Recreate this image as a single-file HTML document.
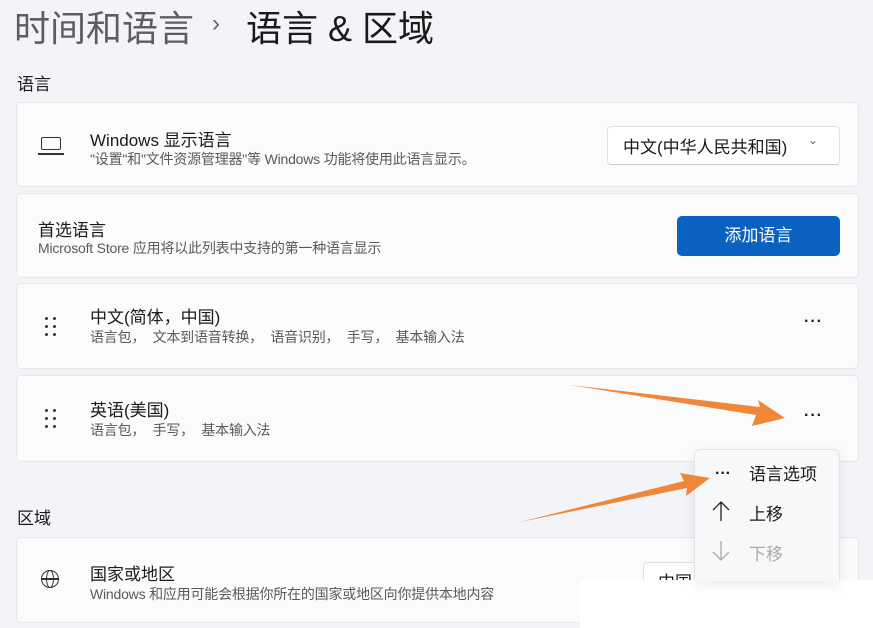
<html><head><style>
body{margin:0;width:873px;height:628px;background:#f2f4f8;font-family:"Liberation Sans","Noto Sans CJK SC",sans-serif;position:relative;overflow:hidden;color:#1a1a1a}
.a{position:absolute}
.card{position:absolute;left:16px;width:843px;background:#fbfbfc;border:1px solid #e6e7ea;border-radius:5px;box-sizing:border-box}
.t{font-size:17px;color:#1b1b1b}
.s{font-size:14px;color:#5a5a5a;letter-spacing:-0.2px}
.dots{font-size:16px;letter-spacing:1px;font-weight:bold}
.grip{position:absolute;left:28px;width:14px;height:20px}
.grip i{position:absolute;width:3px;height:3px;background:#333;border-radius:2px}
</style></head><body>
<div class="a" style="left:14px;top:0px;font-size:36px;color:#5e5e5e">时间和语言</div>
<div class="a" style="left:212px;top:10px;font-size:24px;color:#666">›</div>
<div class="a" style="left:246px;top:0px;font-size:36px;color:#1a1a1a">语言 &amp; 区域</div>
<div class="a" style="left:17px;top:70px;font-size:17px">语言</div>

<div class="card" style="top:102px;height:85px">
 <div class="a" style="left:24px;top:34px;width:20px;height:13px;border:1.5px solid #333;border-radius:2px;box-sizing:border-box"></div>
 <div class="a" style="left:21px;top:50px;width:26px;height:1.5px;background:#333"></div>
 <div class="a t" style="left:73px;top:23px">Windows 显示语言</div>
 <div class="a s" style="left:73px;top:46px">"设置"和"文件资源管理器"等 Windows 功能将使用此语言显示。</div>
 <div class="a" style="left:590px;top:23px;width:233px;height:39px;background:#fff;border:1px solid #e1e1e1;border-bottom-color:#ccc;border-radius:4px;box-sizing:border-box">
  <span class="a" style="left:15px;top:6px;font-size:17px">中文(中华人民共和国)</span>
  <span class="a" style="left:200px;top:6px;font-size:12px;color:#666">⌄</span></div>
</div>

<div class="card" style="top:193px;height:85px">
 <div class="a t" style="left:21px;top:22px">首选语言</div>
 <div class="a s" style="left:21px;top:44px">Microsoft Store 应用将以此列表中支持的第一种语言显示</div>
 <div class="a" style="left:660px;top:22px;width:163px;height:40px;background:#0a61c0;border-radius:5px;color:#fff;font-size:17px;text-align:center;line-height:40px">添加语言</div>
</div>

<div class="card" style="top:283px;height:86px">
 <div class="grip" style="top:33px"><i style="left:0;top:0"></i><i style="left:8px;top:0"></i><i style="left:0;top:8px"></i><i style="left:8px;top:8px"></i><i style="left:0;top:16px"></i><i style="left:8px;top:16px"></i></div>
 <div class="a t" style="left:73px;top:19px">中文(简体，中国)</div>
 <div class="a s" style="left:73px;top:43px">语言包，&nbsp; 文本到语音转换，&nbsp; 语音识别，&nbsp; 手写，&nbsp; 基本输入法</div>
 <div class="a dots" style="left:787px;top:29px">···</div>
</div>

<div class="card" style="top:375px;height:87px">
 <div class="grip" style="top:33px"><i style="left:0;top:0"></i><i style="left:8px;top:0"></i><i style="left:0;top:8px"></i><i style="left:8px;top:8px"></i><i style="left:0;top:16px"></i><i style="left:8px;top:16px"></i></div>
 <div class="a t" style="left:73px;top:20px">英语(美国)</div>
 <div class="a s" style="left:73px;top:44px">语言包，&nbsp; 手写，&nbsp; 基本输入法</div>
 <div class="a dots" style="left:787px;top:31px">···</div>
</div>

<div class="a" style="left:17px;top:504px;font-size:17px">区域</div>
<div class="card" style="top:537px;height:86px">
 <div class="a" style="left:24px;top:32px;width:18px;height:18px;border:1.5px solid #333;border-radius:50%;box-sizing:border-box"></div>
 <div class="a" style="left:29px;top:32px;width:8px;height:18px;border:1.5px solid #333;border-radius:50%;box-sizing:border-box"></div>
 <div class="a" style="left:24px;top:40px;width:18px;height:1.5px;background:#333"></div>
 <div class="a t" style="left:73px;top:22px">国家或地区</div>
 <div class="a s" style="left:73px;top:46px">Windows 和应用可能会根据你所在的国家或地区向你提供本地内容</div>
 <div class="a" style="left:626px;top:24px;width:80px;height:40px;background:#fff;border:1px solid #e1e1e1;border-radius:4px"><span class="a" style="left:14px;top:5px;font-size:17px">中国</span></div>
</div>
<div class="a" style="left:580px;top:580px;width:293px;height:48px;background:#fff"></div>

<div class="a" style="left:694px;top:449px;width:144px;height:131px;background:#f7f8fa;border:1px solid #e3e4e7;border-bottom:none;border-radius:7px 7px 0 0;box-shadow:0 4px 12px rgba(0,0,0,.08)">
 <div class="a" style="left:20px;top:15px;font-size:16px;font-weight:bold">···</div>
 <div class="a" style="left:54px;top:10px;font-size:17px">语言选项</div>
 <svg class="a" style="left:16px;top:50px" width="20" height="22"><path d="M10 2V21M2 10L10 2L18 10" stroke="#222" stroke-width="1.3" fill="none"/></svg>
 <div class="a" style="left:54px;top:50px;font-size:17px">上移</div>
 <svg class="a" style="left:16px;top:90px" width="20" height="22"><path d="M10 1V20M2 12L10 20L18 12" stroke="#aaa" stroke-width="1.3" fill="none"/></svg>
 <div class="a" style="left:54px;top:90px;font-size:17px;color:#aaa">下移</div>
</div>

<svg class="a" style="left:0;top:0" width="873" height="628">
 <polygon points="570,385 760,407 758,400 785,418 752,426 756,415" fill="#f0863a"/>
 <polygon points="520,522 684,481 680,473 710,478 686,496 687,488" fill="#f0863a"/>
</svg>
</body></html>
